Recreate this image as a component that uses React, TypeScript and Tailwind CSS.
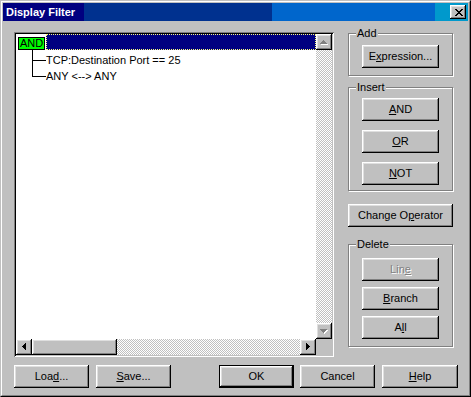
import React from "react";

const raised =
  "shadow-[inset_-1px_-1px_#000,inset_1px_1px_#fff,inset_-2px_-2px_#808080,inset_2px_2px_#dfdfdf]";
const checker =
  "bg-[repeating-conic-gradient(#c0c0c0_0%_25%,#ffffff_0%_50%)] bg-[length:2px_2px]";

const ARROWS = {
  up: "M3 0h1v1h-1z M2 1h3v1h-3z M1 2h5v1h-5z M0 3h7v1h-7z",
  down: "M0 0h7v1h-7z M1 1h5v1h-5z M2 2h3v1h-3z M3 3h1v1h-1z",
  left: "M3 0h1v7h-1z M2 1h1v5h-1z M1 2h1v3h-1z M0 3h1v1h-1z",
  right: "M0 0h1v7h-1z M1 1h1v5h-1z M2 2h1v3h-1z M3 3h1v1h-1z",
};

function Arrow({ dir, disabled }: { dir: keyof typeof ARROWS; disabled?: boolean }) {
  const vertical = dir === "up" || dir === "down";
  const w = vertical ? 8 : 5;
  const h = vertical ? 5 : 8;
  return (
    <svg width={w} height={h} shapeRendering="crispEdges">
      {disabled && <path d={ARROWS[dir]} fill="#fff" transform="translate(1 1)" />}
      <path d={ARROWS[dir]} fill={disabled ? "#808080" : "#000"} />
    </svg>
  );
}

function ScrollBtn({ dir, disabled }: { dir: keyof typeof ARROWS; disabled?: boolean }) {
  return (
    <div className={`flex h-[16px] w-[16px] shrink-0 items-center justify-center bg-[#c0c0c0] ${raised}`}>
      <Arrow dir={dir} disabled={disabled} />
    </div>
  );
}

function Btn({
  children,
  className = "",
  isDefault,
  disabled,
}: {
  children: React.ReactNode;
  className?: string;
  isDefault?: boolean;
  disabled?: boolean;
}) {
  const frame = isDefault
    ? "shadow-[inset_0_0_0_1px_#000,inset_-2px_-2px_#000,inset_2px_2px_#fff,inset_-3px_-3px_#808080,inset_3px_3px_#dfdfdf]"
    : raised;
  return (
    <div
      className={`flex h-[23px] shrink-0 items-center justify-center bg-[#c0c0c0] text-[11px] leading-none ${frame} ${
        disabled ? "text-[#808080] [text-shadow:1px_1px_0_#fff]" : "text-black"
      } ${className}`}
    >
      <span className="pb-px">{children}</span>
    </div>
  );
}

function Group({
  label,
  className = "",
  children,
}: {
  label: string;
  className?: string;
  children: React.ReactNode;
}) {
  return (
    <div
      className={`relative w-[105px] border border-[#808080] shadow-[inset_1px_1px_#fff,1px_1px_#fff] pl-[13px] ${className}`}
    >
      <span className="absolute left-[7px] top-[-7px] bg-[#c0c0c0] px-px text-[11px] leading-[13px] text-black">
        {label}
      </span>
      {children}
    </div>
  );
}

function Connector({ last }: { last?: boolean }) {
  return (
    <svg width="14" height="16" className="shrink-0 overflow-visible" shapeRendering="crispEdges">
      <line x1="0.5" y1={-2} x2="0.5" y2={last ? 8.5 : 16} stroke="#000" />
      <line x1="0" y1="8.5" x2="14" y2="8.5" stroke="#000" />
    </svg>
  );
}

export default function App() {
  return (
    <div className="h-[397px] w-[471px] border border-t-[#c0c0c0] border-l-[#c0c0c0] border-r-black border-b-black bg-[#c0c0c0] font-['Liberation_Sans',Arial,sans-serif]">
      <div className="flex h-full flex-col border border-t-white border-l-white border-r-[#808080] border-b-[#808080] p-px">
        {/* title bar */}
        <div className="flex h-[18px] shrink-0 items-center justify-between bg-[linear-gradient(to_right,#000080_0_81px,#00318f_81px_269px,#0066cc_269px_432px,#0099cc_432px)] pl-[3px] pr-[2px]">
          <span className="text-[11px] font-bold leading-none text-white">Display Filter</span>
          <div className={`flex h-[14px] w-[16px] items-center justify-center bg-[#c0c0c0] pl-px ${raised}`}>
            <svg width="8" height="7" shapeRendering="crispEdges">
              <path
                d="M0 0h2v1h-2z M6 0h2v1h-2z M1 1h2v1h-2z M5 1h2v1h-2z M2 2h4v1h-4z M3 3h2v1h-2z M2 4h4v1h-4z M1 5h2v1h-2z M5 5h2v1h-2z M0 6h2v1h-2z M6 6h2v1h-2z"
                fill="#000"
              />
            </svg>
          </div>
        </div>

        {/* body */}
        <div className="flex flex-1 flex-col pl-[11px] pt-[11px]">
          <div className="flex gap-[14px]">
            {/* tree view */}
            <div className="flex h-[325px] w-[320px] flex-col p-[2px] shadow-[inset_1px_1px_#808080,inset_-1px_-1px_#fff,inset_2px_2px_#000,inset_-2px_-2px_#c0c0c0]">
              <div className="flex h-[305px]">
                <div className="w-[300px] bg-white text-[11px] leading-[16px] text-black">
                  <div className="flex h-[18px] items-start">
                    <div className="ml-[2px] mt-[3px] flex h-[13px] items-center border border-black bg-[#00ff00] px-px leading-none">
                      AND
                    </div>
                    <div className="ml-px h-[16px] flex-1 border border-dotted border-[#ffff7f] bg-[#000080]" />
                  </div>
                  <div className="flex h-[16px] items-center pl-[16px]">
                    <Connector />
                    <span>TCP:Destination Port == 25</span>
                  </div>
                  <div className="flex h-[16px] items-center pl-[16px]">
                    <Connector last />
                    <span>ANY &lt;--&gt; ANY</span>
                  </div>
                </div>
                <div className={`flex w-[16px] flex-col justify-between ${checker}`}>
                  <ScrollBtn dir="up" disabled />
                  <ScrollBtn dir="down" disabled />
                </div>
              </div>
              <div className="flex h-[16px]">
                <div className={`flex w-[300px] ${checker}`}>
                  <ScrollBtn dir="left" />
                  <div className={`h-[16px] w-[85px] bg-[#c0c0c0] ${raised}`} />
                  <div className="flex-1" />
                  <ScrollBtn dir="right" />
                </div>
                <div className="w-[16px] bg-[#c0c0c0]" />
              </div>
            </div>

            {/* right column */}
            <div className="mt-px flex w-[105px] flex-col">
              <Group label="Add" className="h-[43px] pt-[11px]">
                <Btn className="w-[77px]">
                  E<u>x</u>pression...
                </Btn>
              </Group>
              <Group label="Insert" className="mt-[11px] flex h-[104px] flex-col gap-[9px] pt-[10px]">
                <Btn className="w-[77px]">
                  <u>A</u>ND
                </Btn>
                <Btn className="w-[77px]">
                  <u>O</u>R
                </Btn>
                <Btn className="w-[77px]">
                  <u>N</u>OT
                </Btn>
              </Group>
              <Btn className="mt-[13px] w-[105px]">
                Change O<u>p</u>erator
              </Btn>
              <Group label="Delete" className="mt-[17px] flex h-[103px] flex-col gap-[6px] pt-[13px]">
                <Btn className="w-[77px]" disabled>
                  Lin<u>e</u>
                </Btn>
                <Btn className="w-[77px]">
                  <u>B</u>ranch
                </Btn>
                <Btn className="w-[77px]">
                  A<u>l</u>l
                </Btn>
              </Group>
            </div>
          </div>

          {/* bottom buttons */}
          <div className="mt-[8px] flex">
            <Btn className="w-[75px]">
              Loa<u>d</u>...
            </Btn>
            <Btn className="ml-[7px] w-[75px]">
              <u>S</u>ave...
            </Btn>
            <Btn className="ml-[48px] w-[75px]" isDefault>
              OK
            </Btn>
            <Btn className="ml-[6px] w-[75px]">Cancel</Btn>
            <Btn className="ml-[7px] w-[76px]">
              <u>H</u>elp
            </Btn>
          </div>
        </div>
      </div>
    </div>
  );
}
